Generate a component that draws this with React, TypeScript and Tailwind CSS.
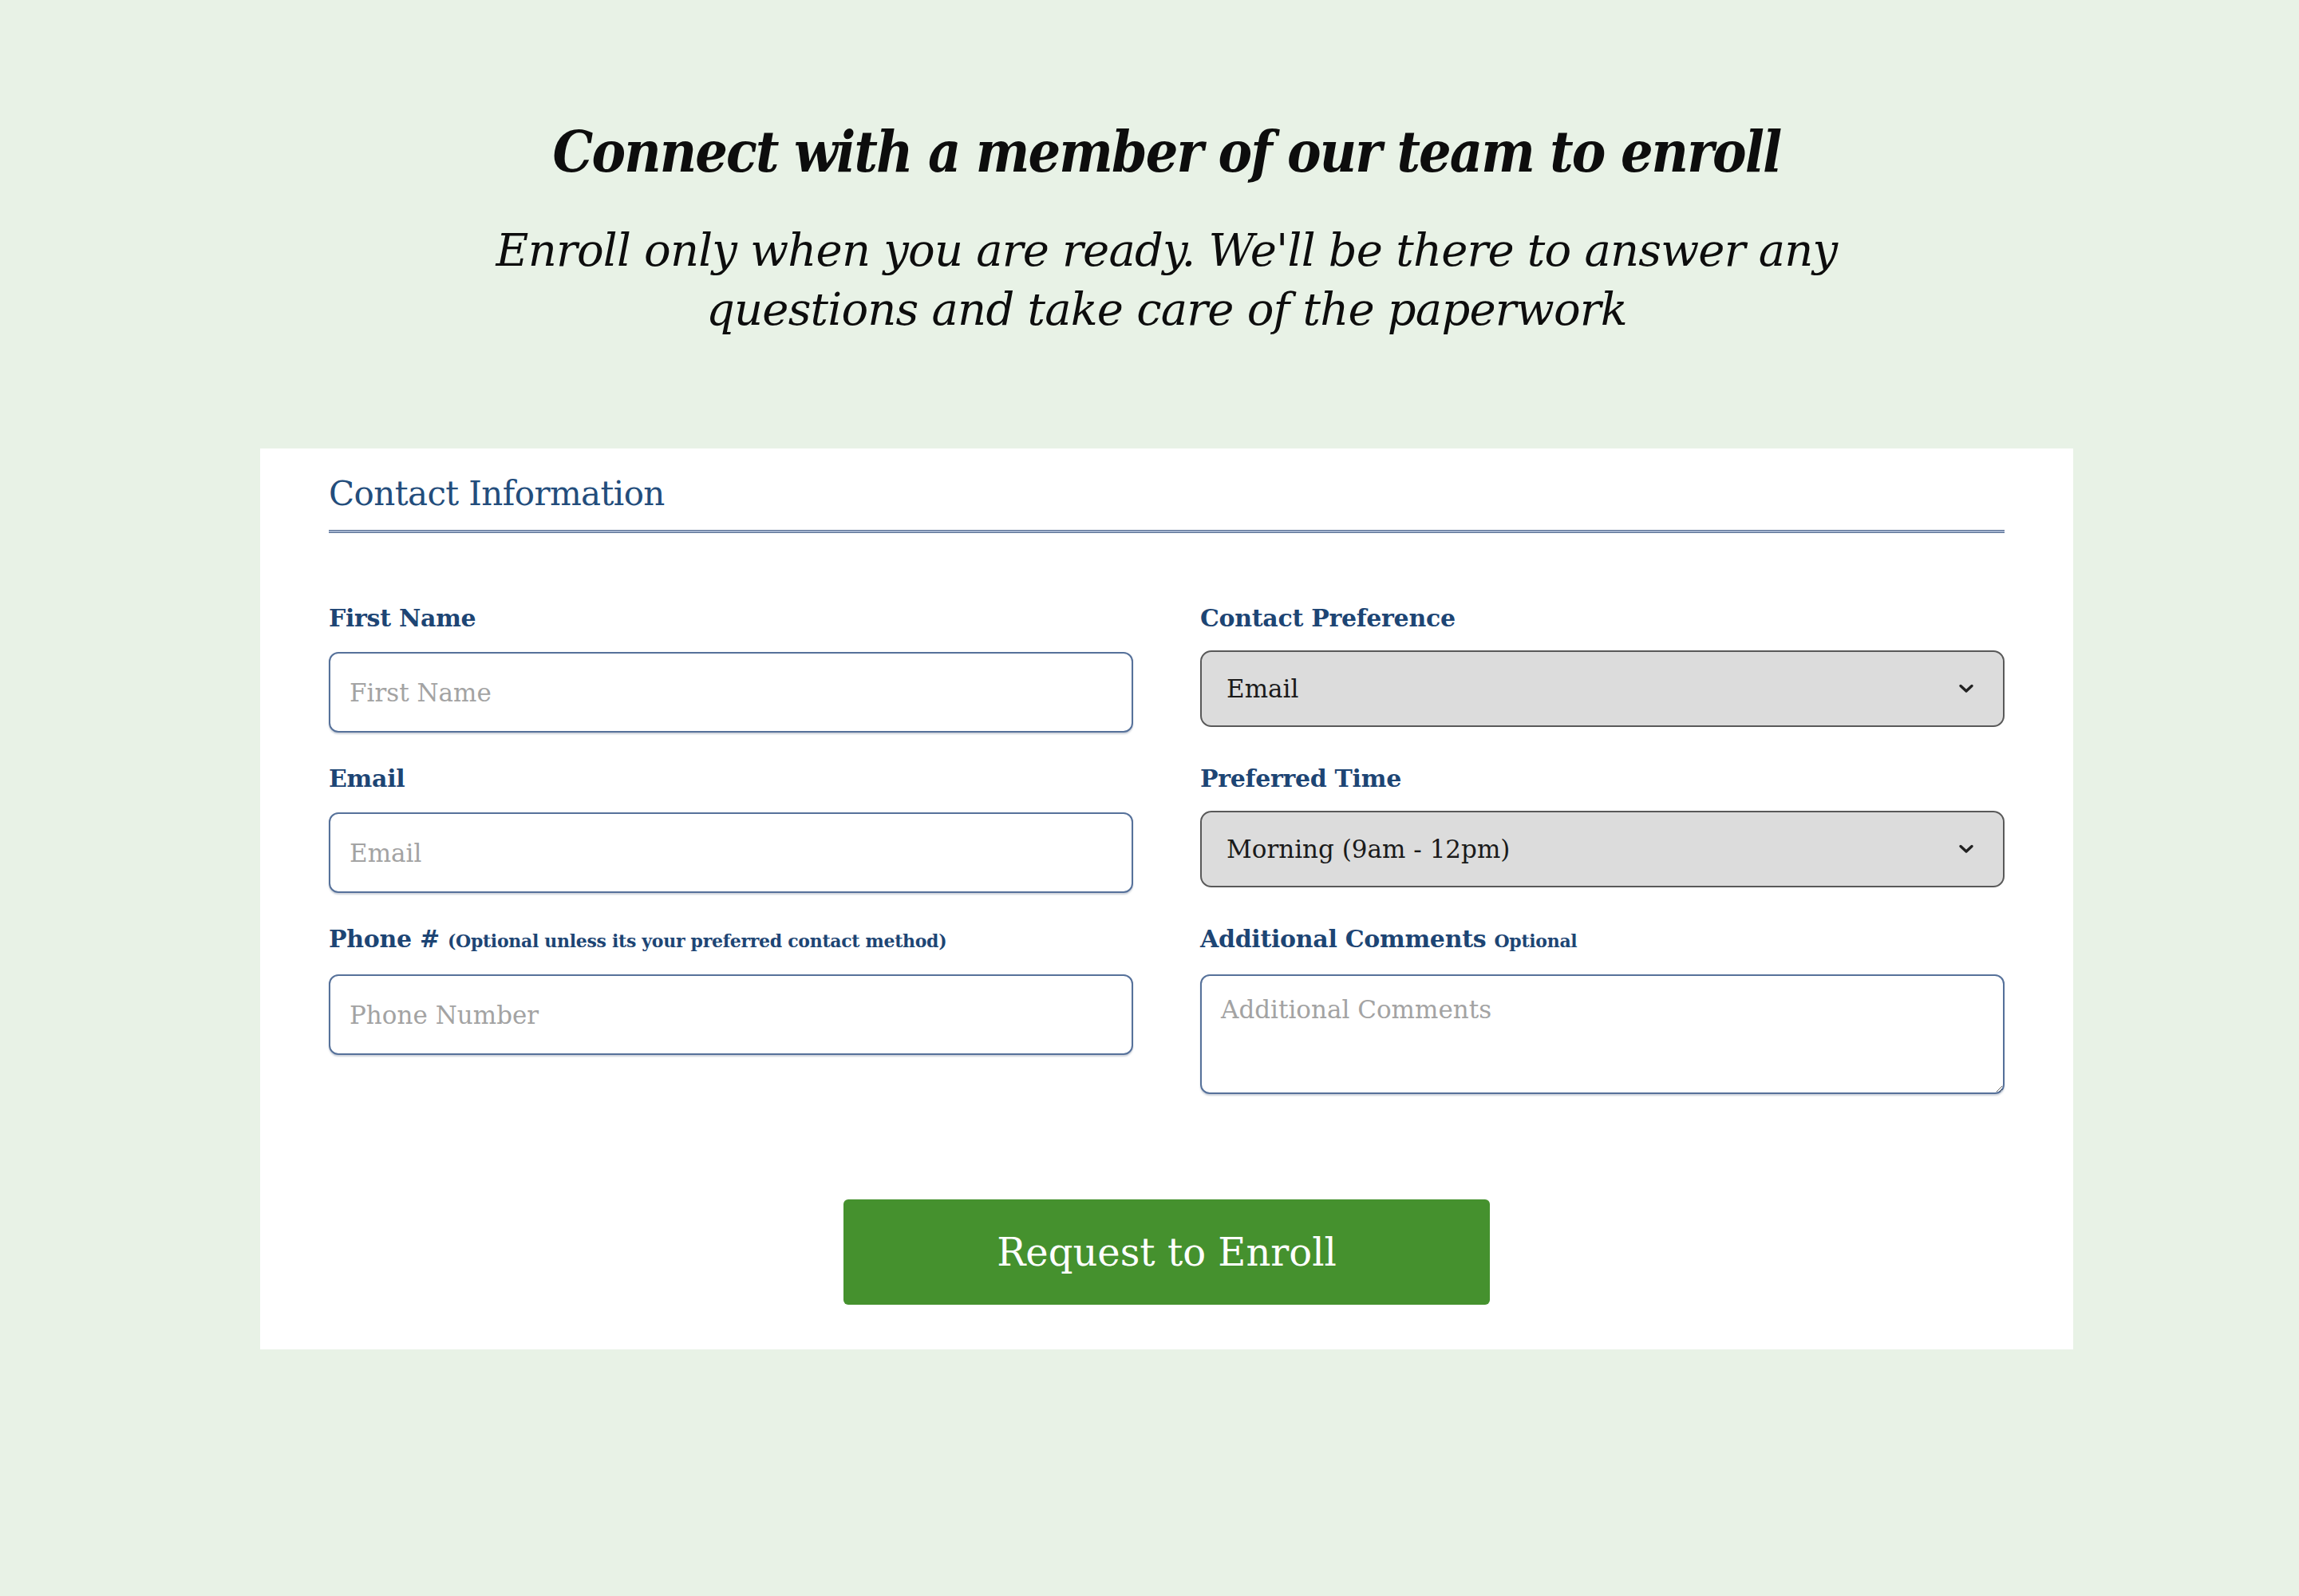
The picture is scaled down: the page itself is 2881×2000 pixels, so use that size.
import { useState } from 'react'

function Chevron() {
  return (
    <svg
      className="pointer-events-none absolute right-[38px] top-1/2 h-[12px] w-[20px] -translate-y-1/2"
      viewBox="0 0 20 12"
      fill="none"
    >
      <path d="M3 2.5 L10 9 L17 2.5" stroke="#222" strokeWidth="3.4" strokeLinecap="round" strokeLinejoin="round" />
    </svg>
  )
}

export default function App() {
  const [pref, setPref] = useState('Email')
  const [time, setTime] = useState('Morning (9am - 12pm)')

  const label = 'block text-[30px] leading-[40px] font-bold text-[#1d4574] tracking-[-0.3px]'
  const field =
    'block w-full rounded-[12px] border-2 border-[#56719a] bg-white px-[24px] text-[31px] text-[#222] placeholder:text-[#a3a3a3] shadow-[0_2px_2px_rgba(60,80,110,0.25)] outline-none'
  const select =
    'block h-[96px] w-full appearance-none rounded-[14px] border-2 border-[#595959] bg-[#dcdcdc] pl-[31px] pr-[80px] text-[31px] text-[#1a1a1a] outline-none'

  return (
    <div className="min-h-[2000px] w-full bg-[#e8f2e6] pl-[43px] font-['DejaVu_Serif',serif]">
      <div className="flex flex-col items-center pt-[147px]">
        <h1 className="text-[71px] leading-[86px] font-bold italic tracking-[-1.9px] text-[#0d0d0d] [font-stretch:condensed]">
          Connect with a member of our team to enroll
        </h1>
        <p className="mt-[44px] text-center text-[56px] leading-[74px] italic tracking-[-0.8px] text-[#0d0d0d]">
          Enroll only when you are ready. We'll be there to answer any
          <br />
          questions and take care of the paperwork
        </p>

        <form
          className="mt-[137px] w-[2272px] bg-white px-[86px] pt-[29px] pb-[56px]"
          onSubmit={(e) => e.preventDefault()}
        >
          <h2 className="text-[42px] leading-[56px] tracking-[-0.6px] text-[#234d7c]">Contact Information</h2>
          <div className="mt-[17px] h-[4px] border-y border-[#5b7195] bg-[#a1b2cd]" />

          <div className="mt-[87px] grid grid-cols-2 gap-x-[84px] gap-y-[38px]">
            <div>
              <label className={label}>First Name</label>
              <input className={`${field} mt-[22px] h-[101px]`} placeholder="First Name" />
            </div>
            <div>
              <label className={label}>Contact Preference</label>
              <div className="relative mt-[20px]">
                <select className={select} value={pref} onChange={(e) => setPref(e.target.value)}>
                  <option>Email</option>
                  <option>Phone</option>
                </select>
                <Chevron />
              </div>
            </div>

            <div>
              <label className={label}>Email</label>
              <input className={`${field} mt-[22px] h-[101px]`} placeholder="Email" />
            </div>
            <div>
              <label className={label}>Preferred Time</label>
              <div className="relative mt-[20px]">
                <select className={select} value={time} onChange={(e) => setTime(e.target.value)}>
                  <option>Morning (9am - 12pm)</option>
                  <option>Afternoon (12pm - 5pm)</option>
                </select>
                <Chevron />
              </div>
            </div>

            <div>
              <label className={label}>
                Phone # <span className="text-[22px]">(Optional unless its your preferred contact method)</span>
              </label>
              <input className={`${field} mt-[22px] h-[101px]`} placeholder="Phone Number" />
            </div>
            <div>
              <label className={label}>
                Additional Comments <span className="text-[22px]">Optional</span>
              </label>
              <textarea
                className={`${field} mt-[22px] h-[150px] pt-[22px] leading-[40px]`}
                placeholder="Additional Comments"
              />
            </div>
          </div>

          <div className="mt-[132px] flex justify-center">
            <button
              type="submit"
              className="h-[132px] w-[810px] rounded-[6px] bg-[#45912e] text-[48px] text-white"
            >
              Request to Enroll
            </button>
          </div>
        </form>
      </div>
    </div>
  )
}
